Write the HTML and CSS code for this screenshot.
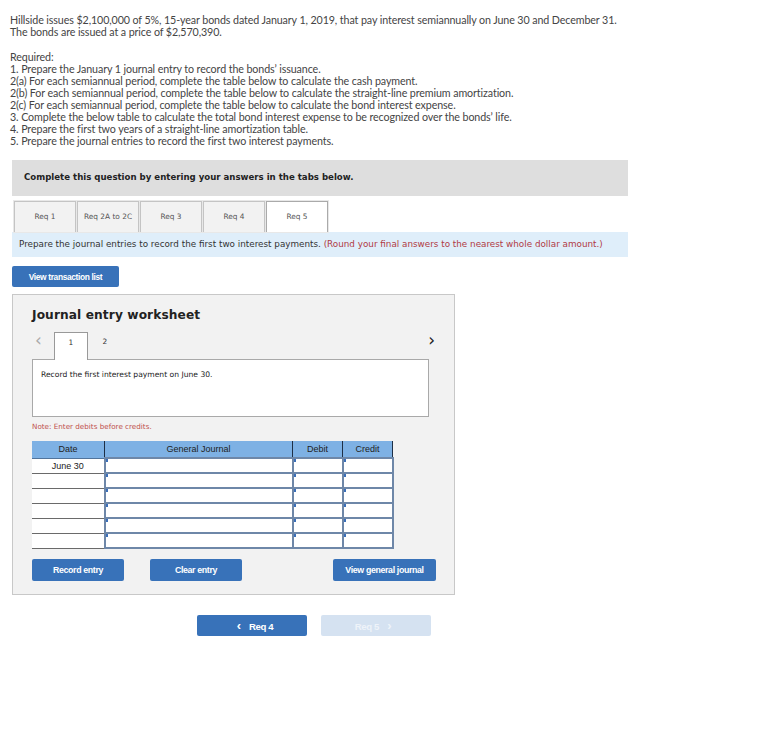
FILE: index.html
```html
<!DOCTYPE html>
<html lang="en">

<head>
    <meta charset="UTF-8">
    <meta name="viewport" content="width=device-width, initial-scale=1.0">
    <title>Journal entry worksheet</title>
    <link rel="stylesheet" href="styles.css">
</head>

<body>
    <div class="question">
        <p>Hillside issues $2,100,000 of 5%, 15-year bonds dated January 1, 2019, that pay interest semiannually on June 30 and December 31.<br>
            The bonds are issued at a price of $2,570,390.</p>
        <p>Required:<br>
            1. Prepare the January 1 journal entry to record the bonds’ issuance.<br>
            2(a) For each semiannual period, complete the table below to calculate the cash payment.<br>
            2(b) For each semiannual period, complete the table below to calculate the straight-line premium amortization.<br>
            2(c) For each semiannual period, complete the table below to calculate the bond interest expense.<br>
            3. Complete the below table to calculate the total bond interest expense to be recognized over the bonds’ life.<br>
            4. Prepare the first two years of a straight-line amortization table.<br>
            5. Prepare the journal entries to record the first two interest payments.</p>
    </div>

    <div class="banner">Complete this question by entering your answers in the tabs below.</div>

    <div class="tabs">
        <div class="tab">Req 1</div>
        <div class="tab">Req 2A to 2C</div>
        <div class="tab">Req 3</div>
        <div class="tab">Req 4</div>
        <div class="tab active">Req 5</div>
    </div>

    <div class="info">Prepare the journal entries to record the first two interest payments. <span class="hint">(Round your final answers to the nearest whole dollar amount.)</span></div>

    <button class="btn btn-list">View transaction list</button>

    <div class="worksheet">
        <h3>Journal entry worksheet</h3>

        <div class="entry-nav">
            <span class="arrow arrow-off">&#8249;</span>
            <span class="entry-tab active">1</span>
            <span class="entry-tab">2</span>
            <span class="arrow arrow-next">&#8250;</span>
        </div>

        <div class="entry-text">Record the first interest payment on June 30.</div>

        <div class="note">Note: Enter debits before credits.</div>

        <table class="journal">
            <thead>
                <tr>
                    <th class="col-date">Date</th>
                    <th class="col-acct">General Journal</th>
                    <th class="col-amt">Debit</th>
                    <th class="col-amt">Credit</th>
                </tr>
            </thead>
            <tbody>
                <tr>
                    <td class="date">June 30</td>
                    <td class="input"></td>
                    <td class="input"></td>
                    <td class="input"></td>
                </tr>
                <tr>
                    <td class="date"></td>
                    <td class="input"></td>
                    <td class="input"></td>
                    <td class="input"></td>
                </tr>
                <tr>
                    <td class="date"></td>
                    <td class="input"></td>
                    <td class="input"></td>
                    <td class="input"></td>
                </tr>
                <tr>
                    <td class="date"></td>
                    <td class="input"></td>
                    <td class="input"></td>
                    <td class="input"></td>
                </tr>
                <tr>
                    <td class="date"></td>
                    <td class="input"></td>
                    <td class="input"></td>
                    <td class="input"></td>
                </tr>
                <tr>
                    <td class="date"></td>
                    <td class="input"></td>
                    <td class="input"></td>
                    <td class="input"></td>
                </tr>
            </tbody>
        </table>

        <div class="actions">
            <button class="btn btn-record">Record entry</button>
            <button class="btn btn-clear">Clear entry</button>
            <button class="btn btn-view">View general journal</button>
        </div>
    </div>

    <div class="pager">
        <button class="btn btn-prev"><span class="chev">&#8249;</span> Req 4</button>
        <button class="btn btn-next">Req 5 <span class="chev">&#8250;</span></button>
    </div>
</body>

</html>
```

FILE: styles.css
```css
body {
    margin: 0;
    padding: 14px 0 0 0;
    color: #333;
    font-family: "Lato", "Liberation Sans", sans-serif;
}

/* Texte de la question */
.question {
    padding-left: 10px;
    font-size: 10.7px;
    line-height: 12px;
    color: #444;
    letter-spacing: -0.1px;
}

.question p {
    margin: 0 0 13px 0;
}

.banner {
    margin: 13px 0 0 12px;
    width: 604px;
    height: 36px;
    padding-left: 12px;
    background-color: #dedede;
    font-family: "DejaVu Sans", Verdana, sans-serif;
    font-size: 8.6px;
    font-weight: bold;
    line-height: 34px;
    color: #222;
}

/* Onglets */
.tabs {
    display: flex;
    gap: 1px;
    margin: 5px 0 0 14px;
}

.tab {
    width: 60px;
    height: 30px;
    border: 1px solid #c4c4c4;
    border-bottom: none;
    background-color: #f2f2f2;
    font-family: "DejaVu Sans", Verdana, sans-serif;
    font-size: 7.4px;
    line-height: 30px;
    text-align: center;
    color: #555;
    outline: 1px solid #e8e8e8;
}

.tab.active {
    background-color: #fff;
    border-color: #aaa;
}

.info {
    margin-left: 12px;
    width: 609px;
    height: 25px;
    padding-left: 7px;
    background-color: #dfeefa;
    font-family: "DejaVu Sans", Verdana, sans-serif;
    font-size: 8.8px;
    line-height: 25px;
    color: #333;
}

.hint {
    color: #b03a44;
}

/* Boutons */
.btn {
    border: none;
    border-radius: 2px;
    background-color: #3872b9;
    color: #fff;
    font-family: "Liberation Sans", Arial, sans-serif;
    font-size: 8.8px;
    font-weight: bold;
    letter-spacing: -0.35px;
    cursor: pointer;
    padding: 0;
}

.btn-list {
    display: block;
    margin: 9px 0 0 12px;
    width: 107px;
    height: 21px;
    font-size: 8.4px;
}

/* Feuille de travail */
.worksheet {
    margin: 7px 0 0 12px;
    width: 441px;
    height: 299px;
    border: 1px solid #c8c8c8;
    background-color: #f2f2f2;
}

.worksheet h3 {
    margin: 12px 0 0 19px;
    font-family: "DejaVu Sans", Verdana, sans-serif;
    font-size: 12.2px;
    line-height: 16px;
    color: #222;
    letter-spacing: 0.1px;
}

.entry-nav {
    display: flex;
    align-items: flex-end;
    margin: 9px 0 0 19px;
    width: 403px;
    height: 27px;
    font-family: "DejaVu Sans", Verdana, sans-serif;
    font-size: 7.4px;
    color: #333;
}

.arrow {
    font-size: 17px;
    line-height: 20px;
    align-self: flex-start;
    margin-top: -2px;
}

.arrow-off {
    margin-left: 3px;
    color: #aaa;
}

.arrow-next {
    margin-left: auto;
    color: #222;
}

.entry-tab {
    width: 34px;
    height: 27px;
    line-height: 20px;
    text-align: center;
    box-sizing: border-box;
}

.entry-tab.active {
    margin-left: 12px;
    height: 28px;
    margin-bottom: -1px;
    border: 1px solid #999;
    border-bottom: none;
    background-color: #fff;
    position: relative;
    z-index: 1;
}

.entry-tab + .entry-tab {
    width: 28px;
    margin-left: 3px;
}

.entry-text {
    margin-left: 19px;
    width: 387px;
    height: 49px;
    padding: 7px 0 0 8px;
    border: 1px solid #a9a9a9;
    background-color: #fff;
    font-family: "DejaVu Sans", Verdana, sans-serif;
    font-size: 7.6px;
    line-height: 16px;
    color: #222;
}

.note {
    margin: 5px 0 0 19px;
    font-family: "DejaVu Sans", Verdana, sans-serif;
    font-size: 7.2px;
    color: #c0504d;
    line-height: 10px;
}

.journal {
    margin: 9px 0 0 19px;
    border-collapse: collapse;
    font-family: "Liberation Sans", Arial, sans-serif;
    font-size: 9px;
    color: #222;
}

.journal th {
    height: 16px;
    padding: 0;
    background-color: #7eb1e4;
    font-weight: normal;
    border-left: 1px solid #1e2f45;
    border-right: 1px solid #1e2f45;
    border-bottom: 1px solid #51749c;
}

.journal th.col-date {
    border-left: none;
}

.col-date {
    width: 72px;
}

.col-acct {
    width: 187px;
}

.col-amt {
    width: 49px;
}

.journal td {
    height: 11px;
    padding: 0;
}

.journal td.date {
    background-color: #fff;
    border-bottom: 1px solid #6a6a6a;
    text-align: center;
    line-height: 12px;
    height: 14px;
}

.journal td.input {
    position: relative;
    background-color: #fff;
    border: 2px solid #6e87a8;
}

.journal td.input::before {
    content: "";
    position: absolute;
    left: 0;
    top: 0;
    width: 2px;
    height: 3px;
    background-color: #3b6fb8;
}

.actions {
    display: flex;
    margin: 10px 0 0 19px;
}

.actions .btn {
    height: 22px;
    width: 92px;
}

.btn-clear {
    margin-left: 26px;
}

.btn-view {
    margin-left: auto;
    margin-right: 18px;
    width: 103px !important;
}

/* Navigation entre les onglets */
.pager {
    display: flex;
    gap: 14px;
    margin: 20px 0 0 197px;
}

.pager .btn {
    width: 110px;
    height: 21px;
    font-size: 9.6px;
}

.chev {
    font-size: 13px;
    margin: 0 6px;
}

.btn-next {
    background-color: #d5e2f1;
    color: #eef3f9;
}
```
